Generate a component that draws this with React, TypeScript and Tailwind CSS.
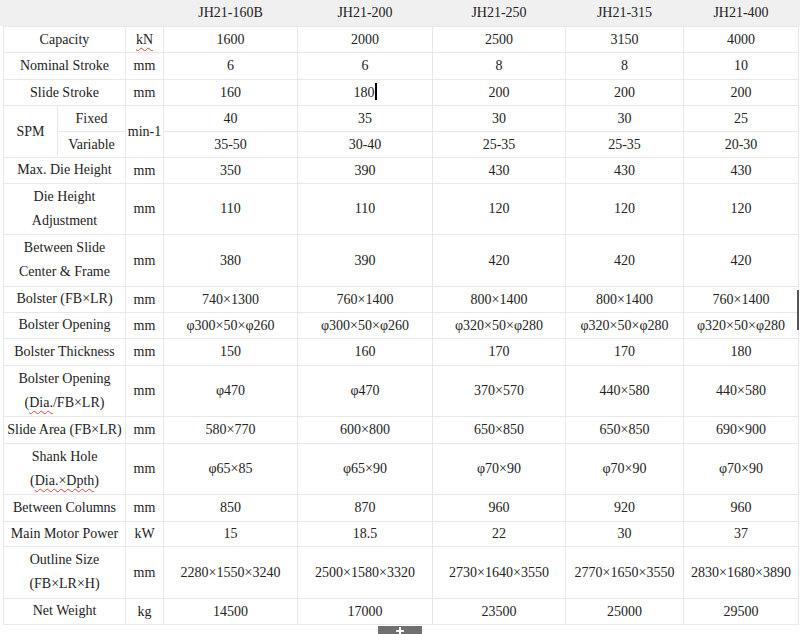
type Row = {
  label: string[];
  unit: string;
  values: string[];
  h: number;
};

const models = ["JH21-160B", "JH21-200", "JH21-250", "JH21-315", "JH21-400"];

const rows: Row[] = [
  { label: ["Max. Die Height"], unit: "mm", values: ["350", "390", "430", "430", "430"], h: 26 },
  { label: ["Die Height", "Adjustment"], unit: "mm", values: ["110", "110", "120", "120", "120"], h: 51 },
  { label: ["Between Slide", "Center & Frame"], unit: "mm", values: ["380", "390", "420", "420", "420"], h: 52 },
  { label: ["Bolster (FB×LR)"], unit: "mm", values: ["740×1300", "760×1400", "800×1400", "800×1400", "760×1400"], h: 26 },
  { label: ["Bolster Opening"], unit: "mm", values: ["φ300×50×φ260", "φ300×50×φ260", "φ320×50×φ280", "φ320×50×φ280", "φ320×50×φ280"], h: 26 },
  { label: ["Bolster Thickness"], unit: "mm", values: ["150", "160", "170", "170", "180"], h: 27 },
];

const rowsB: Row[] = [
  { label: ["Slide Area (FB×LR)"], unit: "mm", values: ["580×770", "600×800", "650×850", "650×850", "690×900"], h: 27 },
];

const rowsC: Row[] = [
  { label: ["Between Columns"], unit: "mm", values: ["850", "870", "960", "920", "960"], h: 27 },
  { label: ["Main Motor Power"], unit: "kW", values: ["15", "18.5", "22", "30", "37"], h: 25 },
  { label: ["Outline Size", "(FB×LR×H)"], unit: "mm", values: ["2280×1550×3240", "2500×1580×3320", "2730×1640×3550", "2770×1650×3550", "2830×1680×3890"], h: 52 },
  { label: ["Net Weight"], unit: "kg", values: ["14500", "17000", "23500", "25000", "29500"], h: 26 },
];

const td = "border border-[#e8e8e8] text-center align-middle p-0";

function Squiggle({ children }: { children: React.ReactNode }) {
  return (
    <span className="underline decoration-wavy decoration-[#e04040] decoration-1 underline-offset-[3px]">
      {children}
    </span>
  );
}

function SpecRow({ row }: { row: Row }) {
  return (
    <tr style={{ height: row.h }}>
      <td colSpan={2} className={td}>
        {row.label.map((l) => (
          <div key={l} className="leading-[24px]">
            {l}
          </div>
        ))}
      </td>
      <td className={td}>{row.unit}</td>
      {row.values.map((v, i) => (
        <td key={i} className={td}>
          {v}
        </td>
      ))}
    </tr>
  );
}

export default function App() {
  return (
    <div className="relative w-[800px] h-[634px] overflow-hidden bg-white text-[14px] text-[#222] font-[family-name:'Liberation_Serif','Times_New_Roman',serif]">
      <div className="bg-[linear-gradient(to_bottom,#f0f0f0_0,#f0f0f0_26px,#fff_26px)] pl-[3px]">
        <table className="table-fixed border-collapse w-[795px]">
          <colgroup>
            <col className="w-[54px]" />
            <col className="w-[68px]" />
            <col className="w-[38px]" />
            <col className="w-[134px]" />
            <col className="w-[135px]" />
            <col className="w-[133px]" />
            <col className="w-[118px]" />
            <col className="w-[115px]" />
          </colgroup>
          <tbody>
            <tr className="h-[26px] bg-[#f0f0f0]">
              <td colSpan={3} className="p-0" />
              {models.map((m) => (
                <td key={m} className="p-0 text-center align-middle">
                  {m}
                </td>
              ))}
            </tr>
            <tr className="h-[26px]">
              <td colSpan={2} className={td}>
                Capacity
              </td>
              <td className={td}>
                <Squiggle>kN</Squiggle>
              </td>
              {["1600", "2000", "2500", "3150", "4000"].map((v) => (
                <td key={v} className={td}>
                  {v}
                </td>
              ))}
            </tr>
            <tr className="h-[27px]">
              <td colSpan={2} className={td}>
                Nominal Stroke
              </td>
              <td className={td}>mm</td>
              {["6", "6", "8", "8", "10"].map((v, i) => (
                <td key={i} className={td}>
                  {v}
                </td>
              ))}
            </tr>
            <tr className="h-[26px]">
              <td colSpan={2} className={td}>
                Slide Stroke
              </td>
              <td className={td}>mm</td>
              <td className={td}>160</td>
              <td className={td}>
                180
                <span className="inline-block w-[2px] h-[17px] bg-black align-[-3px]" />
              </td>
              <td className={td}>200</td>
              <td className={td}>200</td>
              <td className={td}>200</td>
            </tr>
            <tr className="h-[26px]">
              <td rowSpan={2} className={td}>
                SPM
              </td>
              <td className={td}>Fixed</td>
              <td rowSpan={2} className={td}>
                min-1
              </td>
              {["40", "35", "30", "30", "25"].map((v, i) => (
                <td key={i} className={td}>
                  {v}
                </td>
              ))}
            </tr>
            <tr className="h-[26px]">
              <td className={td}>Variable</td>
              {["35-50", "30-40", "25-35", "25-35", "20-30"].map((v, i) => (
                <td key={i} className={td}>
                  {v}
                </td>
              ))}
            </tr>
            {rows.map((r) => (
              <SpecRow key={r.label[0]} row={r} />
            ))}
            <tr className="h-[51px]">
              <td colSpan={2} className={td}>
                <div className="leading-[24px]">Bolster Opening</div>
                <div className="leading-[24px]">
                  (<Squiggle>Dia.</Squiggle>/FB×LR)
                </div>
              </td>
              <td className={td}>mm</td>
              {["φ470", "φ470", "370×570", "440×580", "440×580"].map((v, i) => (
                <td key={i} className={td}>
                  {v}
                </td>
              ))}
            </tr>
            {rowsB.map((r) => (
              <SpecRow key={r.label[0]} row={r} />
            ))}
            <tr className="h-[51px]">
              <td colSpan={2} className={td}>
                <div className="leading-[24px]">Shank Hole</div>
                <div className="leading-[24px]">
                  (<Squiggle>Dia.×Dpth</Squiggle>)
                </div>
              </td>
              <td className={td}>mm</td>
              {["φ65×85", "φ65×90", "φ70×90", "φ70×90", "φ70×90"].map((v, i) => (
                <td key={i} className={td}>
                  {v}
                </td>
              ))}
            </tr>
            {rowsC.map((r) => (
              <SpecRow key={r.label[0]} row={r} />
            ))}
          </tbody>
        </table>
      </div>
      {/* expand tab, cut off by the window bottom */}
      <div className="flex justify-center pt-[1px]">
        <div className="relative h-[12px] w-[44px] bg-[#707070]">
          <div className="absolute left-[18px] top-[4px] h-[2px] w-[8px] bg-white" />
          <div className="absolute left-[21px] top-[1px] h-[8px] w-[2px] bg-white" />
        </div>
      </div>
      <div className="absolute right-[1px] top-[290px] h-[40px] w-[2px] bg-[#555]" />
    </div>
  );
}
